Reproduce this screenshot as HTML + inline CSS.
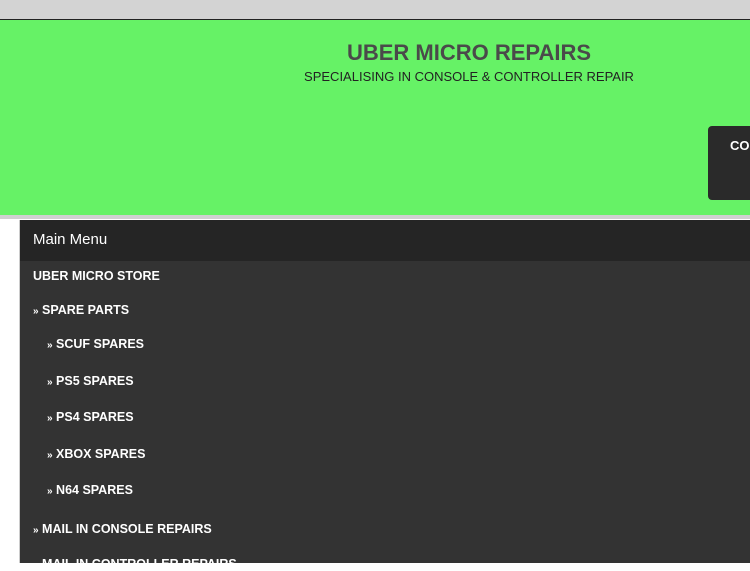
<!DOCTYPE html>
<html><head><style>
body{margin:0;width:750px;height:563px;overflow:hidden;background:#fff;font-family:"Liberation Sans",sans-serif;position:relative}
.top{position:absolute;left:0;top:0;width:750px;height:19px;background:#d3d3d3;border-bottom:1px solid #222}
.hdr{position:absolute;left:0;top:20px;width:750px;height:195px;background:#66f266;border-bottom:4px solid #d0d0d0}
h1{position:absolute;left:0;width:938px;top:20px;margin:0;text-align:center;font-size:22px;color:#4a4a4a;font-weight:bold}
.sub{position:absolute;left:0;width:938px;top:49px;text-align:center;font-size:13px;color:#222}
.btn{position:absolute;left:708px;top:106px;width:60px;height:74px;background:#2a2a2a;border-radius:4px;color:#fff;font-weight:bold;font-size:13px}
.btn span{position:absolute;left:22px;top:12px}
.menu{position:absolute;left:19px;top:220px;width:731px;height:343px;background:#333;border-left:1px solid #ccc}
.mh{height:41px;background:#252525;color:#fff;font-size:15px;line-height:40px;padding-left:13px}
.it{position:absolute;color:#fff;font-weight:bold;font-size:12.5px}
.it b{font-size:10px}
</style></head><body>
<div class="top"></div>
<div class="hdr"><h1>UBER MICRO REPAIRS</h1><div class="sub">SPECIALISING IN CONSOLE &amp; CONTROLLER REPAIR</div><div class="btn"><span>CO</span></div></div>
<div class="menu"><div class="mh">Main Menu</div>
<div class="it" style="left:13px;top:49px">UBER MICRO STORE</div>
<div class="it" style="left:13px;top:83px"><b>»</b> SPARE PARTS</div>
<div class="it" style="left:27px;top:117px"><b>»</b> SCUF SPARES</div>
<div class="it" style="left:27px;top:154px"><b>»</b> PS5 SPARES</div>
<div class="it" style="left:27px;top:190px"><b>»</b> PS4 SPARES</div>
<div class="it" style="left:27px;top:227px"><b>»</b> XBOX SPARES</div>
<div class="it" style="left:27px;top:263px"><b>»</b> N64 SPARES</div>
<div class="it" style="left:13px;top:302px"><b>»</b> MAIL IN CONSOLE REPAIRS</div>
<div class="it" style="left:13px;top:337px"><b>»</b> MAIL IN CONTROLLER REPAIRS</div>
</div>
</body></html>
